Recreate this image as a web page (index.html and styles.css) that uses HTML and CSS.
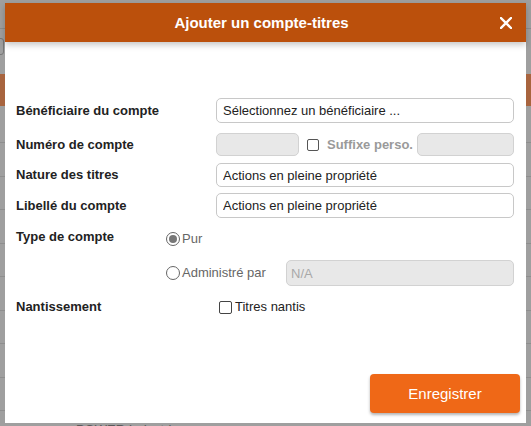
FILE: index.html
```html
<!DOCTYPE html>
<html lang="fr">
<head>
<meta charset="utf-8">
<title>Ajouter un compte-titres</title>
<link rel="stylesheet" href="styles.css">
</head>
<body>
<div class="page">
  <div class="bg-top"></div>
  <div class="bg-icon"></div>
  <div class="bg-band"></div>
  <div class="bg-rows">
    <div class="bg-row first"></div>
    <div class="bg-row"></div>
    <div class="bg-row"></div>
    <div class="bg-row"></div>
    <div class="bg-row"></div>
    <div class="bg-row"></div>
    <div class="bg-row"></div>
    <div class="bg-row"></div>
    <div class="bg-row"></div>
  </div>
  <div class="bg-text">POWER Industries</div>
</div>

<div class="modal">
  <div class="modal-header">
    <span class="modal-title">Ajouter un compte-titres</span>
    <svg class="close" viewBox="0 0 12 12" width="12" height="12" aria-label="Fermer">
      <path d="M1 1 L11 11 M11 1 L1 11" stroke="#fff" stroke-width="2.3" stroke-linecap="square" fill="none"/>
    </svg>
  </div>
  <div class="modal-body">
    <div class="row row-benef">
      <label class="lbl lbl-wide">Bénéficiaire du compte</label>
      <input class="field field-main" type="text" value="Sélectionnez un bénéficiaire ...">
    </div>
    <div class="row row-numero">
      <label class="lbl lbl-wide">Numéro de compte</label>
      <input class="field field-disabled field-num" type="text" disabled>
      <span class="check check-suffix"></span>
      <span class="suffix-text">Suffixe perso.</span>
      <input class="field field-disabled field-suffix" type="text" disabled>
    </div>
    <div class="row row-nature">
      <label class="lbl lbl-wide">Nature des titres</label>
      <input class="field field-main" type="text" value="Actions en pleine propriété">
    </div>
    <div class="row row-libelle">
      <label class="lbl lbl-wide">Libellé du compte</label>
      <input class="field field-main" type="text" value="Actions en pleine propriété">
    </div>
    <div class="row row-type">
      <label class="lbl lbl-type">Type de compte</label>
      <div class="options">
        <div class="option option-pur">
          <span class="radio checked"></span>
          <span class="opt-text">Pur</span>
        </div>
        <div class="option option-admin">
          <span class="radio"></span>
          <span class="opt-text opt-admin">Administré par</span>
          <input class="field field-disabled field-na" type="text" value="N/A" disabled>
        </div>
      </div>
    </div>
    <div class="row row-nantis">
      <label class="lbl lbl-nantis">Nantissement</label>
      <span class="check check-nantis"></span>
      <span class="nantis-text">Titres nantis</span>
    </div>
    <div class="footer">
      <button class="btn-save" type="button">Enregistrer</button>
    </div>
  </div>
</div>
</body>
</html>
```

FILE: styles.css
```css
* {
  box-sizing: border-box;
}

body {
  margin: 0;
  width: 531px;
  height: 426px;
  overflow: hidden;
  position: relative;
  background: #9f9f9f;
  font-family: "Liberation Sans", Arial, sans-serif;
  color: #222;
}

/* ---------- dimmed page behind the modal ---------- */
.page {
  display: flex;
  flex-direction: column;
}

.bg-top {
  height: 29px;
  border-bottom: 1px solid #8c8c8c;
}

.bg-icon {
  width: 8px;
  height: 17px;
  margin: 9px 0 0 -4px;
  border: 1px solid #777;
  border-radius: 3px;
}

.bg-band {
  height: 32px;
  margin-top: 19px;
  background: #a8643e;
}

.bg-row {
  height: 33.5px;
  border-bottom: 1px solid #8e8e8e;
}

.bg-row.first {
  height: 37px;
}

.bg-text {
  margin: 11px 0 0 76px;
  font-size: 13px;
  color: #5a5a5a;
  line-height: 16px;
}

/* ---------- modal ---------- */
.modal {
  position: absolute;
  left: 5px;
  top: 3px;
  width: 521px;
  height: 420px;
  background: #fff;
  display: flex;
  flex-direction: column;
}

.modal-header {
  position: relative;
  z-index: 1;
  height: 39px;
  flex: none;
  background: #bb500c;
  display: flex;
  align-items: center;
  justify-content: center;
  padding-right: 8px;
  box-shadow: 0 3px 6px rgba(0, 0, 0, 0.22);
}

.modal-title {
  color: #fff;
  font-weight: bold;
  font-size: 15px;
  line-height: 18px;
}

.close {
  position: absolute;
  right: 14px;
  top: 14px;
}

.modal-body {
  flex: 1;
  display: flex;
  flex-direction: column;
  padding: 0 12px 0 11px;
}

.row {
  display: flex;
  align-items: center;
}

.lbl {
  font-size: 13px;
  font-weight: bold;
  line-height: 16px;
  color: #222;
  flex: none;
}

.lbl-wide {
  width: 200px;
}

.field {
  height: 100%;
  border: 1px solid #c8c8c8;
  border-radius: 5px;
  background: #fff;
  font-family: "Liberation Sans", Arial, sans-serif;
  font-size: 13px;
  color: #222;
  padding: 0 6px;
  outline: none;
  min-width: 0;
}

.field-main {
  flex: 1;
}

.field-disabled {
  background: #e8e8e8;
  border-color: #d2d2d2;
  color: #a8a8a8;
}

.row-benef {
  margin-top: 56px;
  height: 25px;
}

.row-numero {
  margin-top: 10px;
  height: 23px;
}

.field-num {
  width: 83px;
  flex: none;
}

.check {
  flex: none;
  width: 12px;
  height: 12px;
  border: 1px solid #555;
  border-radius: 2px;
  background: #fff;
}

.check-suffix {
  margin-left: 8px;
}

.suffix-text {
  margin-left: 8px;
  font-size: 13px;
  font-weight: bold;
  color: #9a9a9a;
  white-space: nowrap;
  width: 90px;
  flex: none;
}

.field-suffix {
  flex: 1;
}

.row-nature {
  margin-top: 7px;
  height: 24px;
}

.row-libelle {
  margin-top: 6px;
  height: 25px;
}

.row-type {
  margin-top: 11px;
  align-items: flex-start;
}

.lbl-type {
  width: 150px;
}

.options {
  flex: 1;
  display: flex;
  flex-direction: column;
}

.option {
  display: flex;
  align-items: center;
}

.option-pur {
  margin-top: 2px;
  height: 16px;
}

.option-admin {
  margin-top: 13px;
  height: 26px;
}

.radio {
  flex: none;
  width: 14px;
  height: 14px;
  border: 1px solid #666;
  border-radius: 50%;
  background: #fff;
  display: flex;
  align-items: center;
  justify-content: center;
}

.radio.checked::after {
  content: "";
  width: 8px;
  height: 8px;
  border-radius: 50%;
  background: #777;
}

.opt-text {
  margin-left: 2px;
  font-size: 13px;
  line-height: 16px;
  color: #666;
}

.opt-admin {
  width: 104px;
  flex: none;
}

.field-na {
  flex: 1;
  padding-left: 4px;
}

.row-nantis {
  margin-top: 13px;
  height: 16px;
}

.lbl-nantis {
  width: 203px;
}

.check-nantis {
  width: 13px;
  height: 13px;
  border-color: #444;
}

.nantis-text {
  margin-left: 3px;
  font-size: 13px;
  line-height: 16px;
  color: #222;
}

.footer {
  margin-top: auto;
  margin-right: -6px;
  margin-bottom: 10px;
  display: flex;
  justify-content: flex-end;
}

.btn-save {
  width: 150px;
  height: 39px;
  border: none;
  border-radius: 4px;
  background: #ef6817;
  color: #fff;
  font-family: "Liberation Sans", Arial, sans-serif;
  font-size: 15px;
  box-shadow: 0 2px 3px rgba(0, 0, 0, 0.3);
}
```
